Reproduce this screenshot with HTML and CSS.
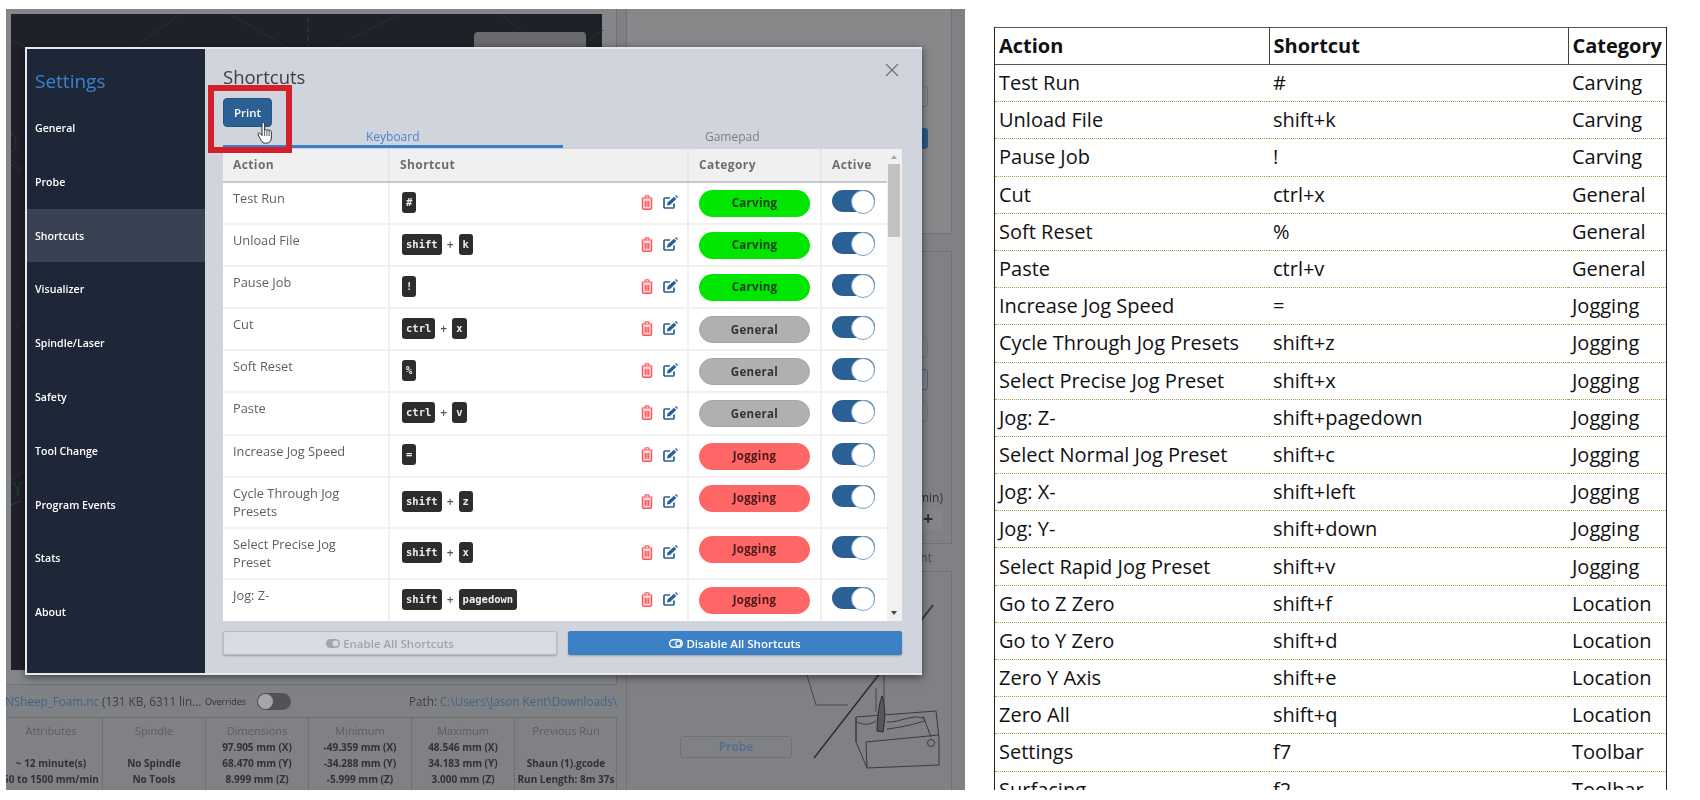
FILE: index.html
```html
<!DOCTYPE html>
<html>
<head>
    <meta charset="UTF-8">
    <link rel="stylesheet" href="styles.css">
</head>
<body>
<svg class="defs" width="0" height="0">
    <symbol id="trash" viewBox="0 0 12 15">
        <path d="M1.500 3.500V13a1.300 1.300 0 0 0 1.300 1.300h6.400A1.300 1.300 0 0 0 10.500 13V3.500" fill="#ffd9da" stroke="#ff5157" stroke-width="1.400"/>
        <path d="M.5 3h11M4 3V1.600C4 1 4.400 .8 5 .8h2c.6 0 1 .2 1 .8V3M4.300 6v5.800M6 6v5.800M7.700 6v5.800" fill="none" stroke="#ff5157" stroke-width="1.200"/>
    </symbol>
    <symbol id="edit" viewBox="0 0 15 14">
        <path d="M11 8.500V12a1 1 0 0 1-1 1H2a1 1 0 0 1-1-1V4a1 1 0 0 1 1-1h5" fill="none" stroke="#2a6093" stroke-width="1.700"/>
        <path d="M4.500 7.500 11 1.800l2.300 2.300L7 10l-3 .6zM12 1 13 0l2 2-1 1z" fill="#2a6093"/>
    </symbol>
    <symbol id="toggle-icon" viewBox="0 0 14 9">
        <rect x=".7" y=".7" width="12.600" height="7.600" rx="3.800" fill="none" stroke="currentColor" stroke-width="1.400"/>
        <circle cx="9.300" cy="4.500" r="2.500" fill="none" stroke="currentColor" stroke-width="1.200"/>
    </symbol>
    <symbol id="toggle-fill" viewBox="0 0 14 9">
        <rect width="14" height="9" rx="4.500" fill="currentColor"/>
        <circle cx="9.500" cy="4.500" r="3" fill="#d8dbe2"/>
    </symbol>
</svg>

<div class="page">
    <div class="shot">
        <div class="left-col">
            <div class="vis-frame">
                <div class="vis">
                    <svg class="vis-lines" width="592" height="656" viewBox="11 14 592 656">
                        <path d="M11 40 90 80 180 14M230 14 310 60 400 14M500 14 560 60 603 30M11 160 25 170M11 330 25 320M11 480 25 470" fill="none" stroke="#2b2e35"/>
                        <path d="M308 18v28" fill="none" stroke="#3c4049" stroke-dasharray="5 4"/>
                        <path d="M11 135c4 0 5 3 5 8s-1 8-5 8M11 164l10 7" fill="none" stroke="#4c2a2e"/>
                        <path d="M13 482l5 8v6M24 482c-3 0-5 3-5 7M11 505l10-4" fill="none" stroke="#25443a"/>
                    </svg>
                    <div class="vis-btn"></div>
                </div>
            </div>
            <div class="file-row">
                <span class="file-name"><a>NSheep_Foam.nc</a> (131 KB, 6311 lin...</span>
                <span class="overrides">Overrides</span>
                <span class="mini-toggle"></span>
                <span class="file-path">Path: <a>C:\Users\Jason Kent\Downloads\</a></span>
            </div>
            <div class="stats">
                <div class="stat"><h5>Attributes</h5><p>&nbsp;</p><p>~ 12 minute(s)</p><p>50 to 1500 mm/min</p></div>
                <div class="stat"><h5>Spindle</h5><p>&nbsp;</p><p>No Spindle</p><p>No Tools</p></div>
                <div class="stat"><h5>Dimensions</h5><p>97.905 mm (X)</p><p>68.470 mm (Y)</p><p>8.999 mm (Z)</p></div>
                <div class="stat"><h5>Minimum</h5><p>-49.359 mm (X)</p><p>-34.288 mm (Y)</p><p>-5.999 mm (Z)</p></div>
                <div class="stat"><h5>Maximum</h5><p>48.546 mm (X)</p><p>34.183 mm (Y)</p><p>3.000 mm (Z)</p></div>
                <div class="stat"><h5>Previous Run</h5><p>&nbsp;</p><p>Shaun (1).gcode</p><p>Run Length: 8m 37s</p></div>
            </div>
        </div>

        <div class="right-col">
            <div class="panel panel-one">
                <div class="ghost-btn"></div>
                <div class="ghost-btn blue"></div>
            </div>
            <div class="panel panel-two">
                <div class="ghost-btn"></div>
                <div class="ghost-btn blue-line"></div>
                <div class="ghost-btn"></div>
                <div class="min-label">(mm/min)</div>
                <div class="plus-btn">+</div>
            </div>
            <div class="gap-label">Probe Contact Point</div>
            <div class="panel panel-three">
                <svg class="probe-art" width="326" height="218" viewBox="626 572 326 218">
                    <path d="M813 758 932 605" fill="none" stroke="#2c2d30" stroke-width="1.500"/>
                    <path d="M806 675 815 705H847M883 675V702M875 688v24" fill="none" stroke="#45464a"/>
                    <path d="M855 717 935 711 938 738V765L866 768 855 742ZM866 768 865 742 938 735M855 717V742M922 716l8 21" fill="none" stroke="#3a3b3f"/>
                    <path d="M856 722c8 4 14 2 19-1M886 722c12 1 24-8 36-4l2 3c-8 2-20 6-38 8" fill="none" stroke="#3a3b3f"/>
                    <circle cx="930" cy="743" r="3.500" fill="none" stroke="#3a3b3f"/>
                    <path d="M881 696c-3 8-5 22-5 35l6 1c2-10 3-26-1-36Z" fill="#55565a" stroke="#2c2d30"/>
                </svg>
                <div class="probe-btn">Probe</div>
            </div>
        </div>

        <div class="modal">
            <div class="sidebar">
                <h2>Settings</h2>
                <div class="nav-item">General</div>
                <div class="nav-item">Probe</div>
                <div class="nav-item active">Shortcuts</div>
                <div class="nav-item">Visualizer</div>
                <div class="nav-item">Spindle/Laser</div>
                <div class="nav-item">Safety</div>
                <div class="nav-item">Tool Change</div>
                <div class="nav-item">Program Events</div>
                <div class="nav-item">Stats</div>
                <div class="nav-item">About</div>
            </div>
            <div class="main">
                <h3>Shortcuts</h3>
                <button class="print-btn">Print</button>
                <div class="tabs">
                    <div class="tab selected">Keyboard</div>
                    <div class="tab">Gamepad</div>
                </div>
                <div class="table-wrap">
                    <table class="shortcuts">
                        <colgroup><col class="c1"><col class="c2"><col class="c3"><col class="c4"></colgroup>
                        <thead>
                            <tr><th>Action</th><th>Shortcut</th><th>Category</th><th>Active</th></tr>
                        </thead>
                        <tbody>
                            <tr>
                                <td class="action">Test Run</td>
                                <td><div class="keys"><kbd>#</kbd><span class="icons"><svg class="i-trash"><use href="#trash"/></svg><svg class="i-edit"><use href="#edit"/></svg></span></div></td>
                                <td class="top"><div class="pill carving">Carving</div></td>
                                <td class="top"><div class="switch"></div></td>
                            </tr>
                            <tr>
                                <td class="action">Unload File</td>
                                <td><div class="keys"><kbd>shift</kbd><i>+</i><kbd>k</kbd><span class="icons"><svg class="i-trash"><use href="#trash"/></svg><svg class="i-edit"><use href="#edit"/></svg></span></div></td>
                                <td class="top"><div class="pill carving">Carving</div></td>
                                <td class="top"><div class="switch"></div></td>
                            </tr>
                            <tr>
                                <td class="action">Pause Job</td>
                                <td><div class="keys"><kbd>!</kbd><span class="icons"><svg class="i-trash"><use href="#trash"/></svg><svg class="i-edit"><use href="#edit"/></svg></span></div></td>
                                <td class="top"><div class="pill carving">Carving</div></td>
                                <td class="top"><div class="switch"></div></td>
                            </tr>
                            <tr>
                                <td class="action">Cut</td>
                                <td><div class="keys"><kbd>ctrl</kbd><i>+</i><kbd>x</kbd><span class="icons"><svg class="i-trash"><use href="#trash"/></svg><svg class="i-edit"><use href="#edit"/></svg></span></div></td>
                                <td class="top"><div class="pill general">General</div></td>
                                <td class="top"><div class="switch"></div></td>
                            </tr>
                            <tr>
                                <td class="action">Soft Reset</td>
                                <td><div class="keys"><kbd>%</kbd><span class="icons"><svg class="i-trash"><use href="#trash"/></svg><svg class="i-edit"><use href="#edit"/></svg></span></div></td>
                                <td class="top"><div class="pill general">General</div></td>
                                <td class="top"><div class="switch"></div></td>
                            </tr>
                            <tr>
                                <td class="action">Paste</td>
                                <td><div class="keys"><kbd>ctrl</kbd><i>+</i><kbd>v</kbd><span class="icons"><svg class="i-trash"><use href="#trash"/></svg><svg class="i-edit"><use href="#edit"/></svg></span></div></td>
                                <td class="top"><div class="pill general">General</div></td>
                                <td class="top"><div class="switch"></div></td>
                            </tr>
                            <tr>
                                <td class="action">Increase Jog Speed</td>
                                <td><div class="keys"><kbd>=</kbd><span class="icons"><svg class="i-trash"><use href="#trash"/></svg><svg class="i-edit"><use href="#edit"/></svg></span></div></td>
                                <td class="top"><div class="pill jogging">Jogging</div></td>
                                <td class="top"><div class="switch"></div></td>
                            </tr>
                            <tr class="tall">
                                <td class="action">Cycle Through Jog Presets</td>
                                <td><div class="keys"><kbd>shift</kbd><i>+</i><kbd>z</kbd><span class="icons"><svg class="i-trash"><use href="#trash"/></svg><svg class="i-edit"><use href="#edit"/></svg></span></div></td>
                                <td class="top"><div class="pill jogging">Jogging</div></td>
                                <td class="top"><div class="switch"></div></td>
                            </tr>
                            <tr class="tall">
                                <td class="action">Select Precise Jog Preset</td>
                                <td><div class="keys"><kbd>shift</kbd><i>+</i><kbd>x</kbd><span class="icons"><svg class="i-trash"><use href="#trash"/></svg><svg class="i-edit"><use href="#edit"/></svg></span></div></td>
                                <td class="top"><div class="pill jogging">Jogging</div></td>
                                <td class="top"><div class="switch"></div></td>
                            </tr>
                            <tr>
                                <td class="action">Jog: Z-</td>
                                <td><div class="keys"><kbd>shift</kbd><i>+</i><kbd>pagedown</kbd><span class="icons"><svg class="i-trash"><use href="#trash"/></svg><svg class="i-edit"><use href="#edit"/></svg></span></div></td>
                                <td class="top"><div class="pill jogging">Jogging</div></td>
                                <td class="top"><div class="switch"></div></td>
                            </tr>
                        </tbody>
                    </table>
                    <div class="scrollbar">
                        <span class="arrow up"></span>
                        <div class="thumb"></div>
                        <span class="arrow down"></span>
                    </div>
                </div>
                <div class="footer-btns">
                    <button class="all-btn off"><svg class="i-toggle"><use href="#toggle-fill"/></svg>Enable All Shortcuts</button>
                    <button class="all-btn on"><svg class="i-toggle"><use href="#toggle-icon"/></svg>Disable All Shortcuts</button>
                </div>
            </div>
            <svg class="close-x" width="14" height="14" viewBox="0 0 14 14"><path d="M1 1 13 13M13 1 1 13" fill="none" stroke="#6d7178" stroke-width="1.200"/></svg>
            <div class="red-box"></div>
            <svg class="hand" width="17" height="22" viewBox="0 0 17 22">
                <path d="M5 1.800c0-1.600 2.600-1.600 2.600 0V8.500c0-1.300 2.300-1.300 2.300.2 0-1.200 2.200-1.200 2.200.3 0-1 2.200-1 2.200.5V16c0 3-2 5.200-4.800 5.200H8.500c-2 0-3.300-1-4.200-2.600L1.200 13c-.9-1.700 1.100-2.900 2.200-1.500L5 13.600Z" fill="#fff" stroke="#2f2f2f" stroke-width="1"/>
                <path d="M7.600 9v5M9.900 9v5M12.100 9v5" fill="none" stroke="#2f2f2f" stroke-width=".8"/>
            </svg>
        </div>
    </div>

    <div class="print-wrap">
        <table class="print-table">
            <colgroup><col class="p1"><col class="p2"><col class="p3"></colgroup>
            <thead>
                <tr><th>Action</th><th>Shortcut</th><th>Category</th></tr>
            </thead>
            <tbody>
                <tr><td>Test Run</td><td>#</td><td>Carving</td></tr>
                <tr><td>Unload File</td><td>shift+k</td><td>Carving</td></tr>
                <tr><td>Pause Job</td><td>!</td><td>Carving</td></tr>
                <tr><td>Cut</td><td>ctrl+x</td><td>General</td></tr>
                <tr><td>Soft Reset</td><td>%</td><td>General</td></tr>
                <tr><td>Paste</td><td>ctrl+v</td><td>General</td></tr>
                <tr><td>Increase Jog Speed</td><td>=</td><td>Jogging</td></tr>
                <tr><td>Cycle Through Jog Presets</td><td>shift+z</td><td>Jogging</td></tr>
                <tr><td>Select Precise Jog Preset</td><td>shift+x</td><td>Jogging</td></tr>
                <tr><td>Jog: Z-</td><td>shift+pagedown</td><td>Jogging</td></tr>
                <tr><td>Select Normal Jog Preset</td><td>shift+c</td><td>Jogging</td></tr>
                <tr><td>Jog: X-</td><td>shift+left</td><td>Jogging</td></tr>
                <tr><td>Jog: Y-</td><td>shift+down</td><td>Jogging</td></tr>
                <tr><td>Select Rapid Jog Preset</td><td>shift+v</td><td>Jogging</td></tr>
                <tr><td>Go to Z Zero</td><td>shift+f</td><td>Location</td></tr>
                <tr><td>Go to Y Zero</td><td>shift+d</td><td>Location</td></tr>
                <tr><td>Zero Y Axis</td><td>shift+e</td><td>Location</td></tr>
                <tr><td>Zero All</td><td>shift+q</td><td>Location</td></tr>
                <tr><td>Settings</td><td>f7</td><td>Toolbar</td></tr>
                <tr><td>Surfacing</td><td>f2</td><td>Toolbar</td></tr>
            </tbody>
        </table>
    </div>
</div>
</body>
</html>
```

FILE: styles.css
```css
* {
    box-sizing: border-box;
}
body {
    margin: 0;
    background: #fff;
    font-family: "Open Sans", "Liberation Sans", sans-serif;
    overflow: hidden;
}
.defs {
    position: absolute;
}
.page {
    display: flex;
    width: 1700px;
    height: 800px;
    padding: 9px 0 10px 6px;
}

/* dimmed app behind the modal */
.shot {
    position: relative;
    display: flex;
    width: 959px;
    height: 781px;
    background: #808185;
    overflow: hidden;
    filter: blur(0.35px);
}
.left-col {
    width: 611px;
    flex-shrink: 0;
}
.vis-frame {
    height: 676px;
    padding: 5px 14px 14px 5px;
    background: #858689;
    border-right: 1px solid #707175;
    border-bottom: 1px solid #707175;
}
.vis {
    position: relative;
    height: 656px;
    padding: 18px 16px 0 0;
    background: #1f2128;
}
.vis-lines {
    position: absolute;
    left: 0;
    top: 0;
}
.vis-btn {
    position: relative;
    width: 112px;
    height: 40px;
    margin-left: auto;
    background: #6a6b6e;
    border-radius: 4px;
}
.file-row {
    display: flex;
    align-items: center;
    height: 32px;
    margin-left: -1px;
    font-size: 11.7px;
    color: #3c3d40;
    white-space: nowrap;
}
.file-row a {
    color: #3f6488;
}
.file-name {
    width: 200px;
    flex-shrink: 0;
}
.overrides {
    width: 52px;
    font-size: 9px;
    color: #2e2f31;
}
.mini-toggle {
    position: relative;
    width: 34px;
    height: 17px;
    border-radius: 9px;
    background: #525356;
}
.mini-toggle::before {
    content: "";
    position: absolute;
    left: 1px;
    top: 1px;
    width: 15px;
    height: 15px;
    border-radius: 50%;
    background: #a5a6a8;
}
.file-path {
    margin-left: auto;
}
.stats {
    display: grid;
    grid-template-columns: repeat(6, 103px);
    height: 80px;
    margin-left: -7px;
    border-top: 1px solid #6f7074;
    border-right: 1px solid #6f7074;
}
.stat {
    padding-top: 5px;
    border-left: 1px solid #6f7074;
    text-align: center;
    white-space: nowrap;
    overflow: hidden;
}
.stat h5 {
    margin: 0;
    height: 16px;
    font-size: 11px;
    line-height: 16px;
    font-weight: 400;
    color: #5c5d60;
}
.stat p {
    margin: 0;
    height: 16px;
    font-size: 10px;
    line-height: 16px;
    font-weight: 700;
    color: #303134;
}
.right-col {
    width: 326px;
    margin-left: 9px;
    flex-shrink: 0;
}
.panel {
    position: relative;
    border: 1px solid #707175;
}
.panel-one {
    height: 226px;
    margin-top: -1px;
    padding-top: 77px;
    background: #87888a;
}
.panel-two {
    height: 293px;
    margin-top: 17px;
    padding-top: 85px;
    background: #808185;
}
.panel-three {
    display: flex;
    align-items: flex-end;
    height: 222px;
    padding: 0 0 34px 53px;
    background: #808185;
}
.ghost-btn {
    width: 60px;
    height: 21px;
    margin: 0 23px 21px auto;
    border: 1px solid #707175;
    border-radius: 3px;
}
.panel-two .ghost-btn {
    margin-bottom: 11px;
}
.ghost-btn.blue {
    background: #2b5a86;
    border: 0;
}
.panel-two .ghost-btn.blue-line {
    border-color: #3f6488;
}
.min-label {
    margin-top: 68px;
    padding-right: 8px;
    font-size: 12px;
    line-height: 16px;
    text-align: right;
    color: #333;
}
.plus-btn {
    width: 50px;
    height: 22px;
    margin: 2px 8px 0 auto;
    padding-left: 30px;
    font-size: 18px;
    line-height: 20px;
    font-weight: 700;
    color: #2e2f31;
    background: #84858a;
}
.gap-label {
    height: 27px;
    padding: 5px 20px 0 0;
    font-size: 12px;
    text-align: right;
    color: #45464a;
}
.probe-art {
    position: absolute;
    left: 0;
    top: 0;
}
.probe-btn {
    position: relative;
    width: 112px;
    height: 22px;
    font-size: 12px;
    line-height: 20px;
    font-weight: 600;
    text-align: center;
    color: #4d6e90;
    border: 1px solid #707175;
    border-radius: 3px;
}

/* modal */
.modal {
    position: absolute;
    left: 19px;
    top: 38px;
    display: flex;
    width: 897px;
    height: 628px;
    background: #d0d4dc;
    border: 2px solid #e6e8ed;
    border-width: 2px 0 2px 2px;
    box-shadow: 0 2px 8px rgba(0, 0, 0, 0.55);
}
.sidebar {
    width: 178px;
    flex-shrink: 0;
    background: #1e2738;
    color: #fff;
}
.sidebar h2 {
    height: 52px;
    margin: 0;
    padding: 18px 0 0 8px;
    font-size: 19px;
    line-height: 28px;
    font-weight: 400;
    color: #3a82d2;
}
.nav-item {
    height: 53.8px;
    padding-left: 8px;
    font-size: 10.6px;
    line-height: 54px;
    font-weight: 600;
}
.nav-item.active {
    background: #384252;
}
.main {
    flex: 1;
    padding: 13px 20px 0 18px;
}
.main h3 {
    height: 30px;
    margin: 0;
    font-size: 18.5px;
    line-height: 30px;
    font-weight: 400;
    color: #3c3f45;
}
.print-btn {
    display: block;
    width: 49px;
    height: 29px;
    margin-top: 6px;
    padding: 0;
    font-family: inherit;
    font-size: 11.5px;
    font-weight: 600;
    color: #fff;
    background: #2a6093;
    border: 1px solid #24557f;
    border-radius: 4px;
}
.tabs {
    display: flex;
    height: 21px;
}
.tab {
    flex: 1;
    height: 21px;
    font-size: 12px;
    line-height: 19px;
    text-align: center;
    color: #7c8187;
}
.tab.selected {
    color: #4d83cc;
    border-bottom: 3px solid #3a7fc8;
}
.table-wrap {
    display: flex;
    height: 472px;
    margin-top: 1px;
    background: #fff;
    overflow: hidden;
}
.shortcuts {
    width: 664px;
    height: 472px;
    table-layout: fixed;
    border-collapse: collapse;
    color: #5d5f63;
    font-size: 12px;
}
.c1 { width: 166px; }
.c2 { width: 299px; }
.c3 { width: 133px; }
.c4 { width: 66px; }
.shortcuts th {
    height: 33px;
    padding: 0 0 2px 10px;
    font-weight: 700;
    font-size: 12px;
    letter-spacing: .4px;
    text-align: left;
    color: #6b6d70;
    background: #f0f0f0;
    border-right: 2px solid #e6e6e6;
    border-bottom: 2px solid #c8c8c8;
}
.shortcuts td {
    height: 42px;
    padding: 0 0 0 12px;
    border-right: 2px solid #f0f0f0;
    border-bottom: 2px solid #f0f0f0;
}
.shortcuts .tall td {
    height: 51px;
}
.shortcuts th:last-child,
.shortcuts td:last-child {
    border-right: 0;
}
.shortcuts tr:last-child td {
    border-bottom: 0;
}
.shortcuts td.action {
    padding: 6px 24px 0 10px;
    vertical-align: top;
    font-size: 12.8px;
    line-height: 18px;
}
.shortcuts td.top {
    padding: 7px 0 0 10px;
    vertical-align: top;
}
.keys {
    display: flex;
    align-items: center;
    padding: 0 9px 2px 0;
}
kbd {
    display: block;
    height: 21px;
    padding: 0 4px;
    font-family: "DejaVu Sans Mono", "Liberation Mono", monospace;
    font-size: 10.5px;
    line-height: 20px;
    font-weight: 700;
    color: #eee;
    background: #2d2d2d;
    border-radius: 3px;
}
.keys i {
    width: 17px;
    font-style: normal;
    font-size: 12px;
    font-weight: 600;
    text-align: center;
    color: #555;
}
.icons {
    display: flex;
    align-items: center;
    gap: 10px;
    margin-left: auto;
}
.i-trash {
    width: 12px;
    height: 15px;
}
.i-edit {
    width: 15px;
    height: 14px;
}
.pill {
    width: 111px;
    height: 27px;
    font-size: 11.5px;
    line-height: 26px;
    font-weight: 700;
    text-align: center;
    letter-spacing: .3px;
    border-radius: 14px;
}
.carving {
    color: #1a4016;
    background: #00e600;
}
.general {
    color: #333;
    background: #b0b0b0;
    border: 1px solid #a5a5a5;
}
.jogging {
    color: #4a1a1c;
    background: #ff6666;
}
.switch {
    position: relative;
    width: 43px;
    height: 22px;
    background: #2a6093;
    border-radius: 11px;
}
.switch::after {
    content: "";
    position: absolute;
    right: 0;
    top: 0;
    width: 22px;
    height: 22px;
    background: #fff;
    border: 1px solid #7da2c6;
    border-radius: 50%;
}
.scrollbar {
    position: relative;
    width: 15px;
    background: #f1f1f1;
}
.thumb {
    width: 12px;
    height: 73px;
    margin: 15px 0 0 1px;
    background: #c1c1c1;
}
.arrow {
    position: absolute;
    left: 4px;
    width: 0;
    height: 0;
    border-left: 3.5px solid transparent;
    border-right: 3.5px solid transparent;
}
.arrow.up {
    top: 6px;
    border-bottom: 4px solid #a8a8a8;
}
.arrow.down {
    bottom: 6px;
    border-top: 4px solid #444;
}
.footer-btns {
    display: flex;
    gap: 11px;
    margin-top: 10px;
}
.all-btn {
    display: flex;
    align-items: center;
    justify-content: center;
    flex: 1;
    height: 24px;
    padding: 0;
    font-family: inherit;
    font-size: 11.5px;
    font-weight: 600;
    border-radius: 2px;
    box-shadow: 0 1px 2px rgba(0, 0, 0, 0.25);
}
.all-btn.off {
    color: #a0a5ac;
    background: #d8dbe2;
    border: 1px solid #b8bbc1;
}
.all-btn.on {
    color: #fff;
    background: #3c80c6;
    border: 1px solid #3c80c6;
}
.i-toggle {
    width: 14px;
    height: 9px;
    margin-right: 3px;
}
.close-x {
    position: absolute;
    right: 23px;
    top: 14px;
}
.red-box {
    position: absolute;
    left: 181px;
    top: 36px;
    width: 84px;
    height: 68px;
    border: 6px solid #d4202a;
}
.hand {
    position: absolute;
    left: 230px;
    top: 73px;
}

/* printed table on the right */
.print-wrap {
    width: 673px;
    height: 763px;
    margin: 18px 0 0 29px;
    overflow: hidden;
    border-right: 1px solid #222;
    border-left: 1px solid #222;
}
.print-table {
    width: 671px;
    table-layout: fixed;
    border-collapse: collapse;
    font-size: 20px;
    line-height: 26px;
    color: #111;
}
.p1 { width: 274px; }
.p2 { width: 299px; }
.p3 { width: 98px; }
.print-table th {
    height: 37px;
    padding: 0 3px 0 4px;
    font-weight: 700;
    text-align: left;
    border-top: 1px solid #555;
    border-bottom: 1px solid #555;
    border-right: 1px solid #444;
}
.print-table th:last-child {
    border-right: 0;
}
.print-table td {
    height: 37.2px;
    padding: 0 3px 0 4px;
    border-bottom: 1px dotted #a89e50;
}
```
